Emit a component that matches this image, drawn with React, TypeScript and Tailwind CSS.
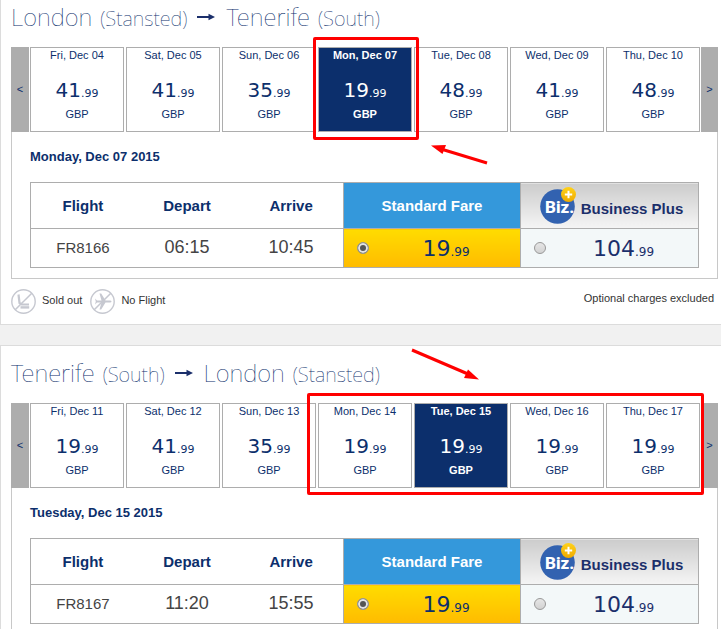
import React, { useState } from 'react';

interface Fare {
  day: string;
  whole: string;
}

interface Place {
  city: string;
  airport: string;
}

interface Trip {
  id: string;
  from: Place;
  to: Place;
  fares: Fare[];
  selected: number;
  fullDate: string;
  flight: string;
  depart: string;
  arrive: string;
}

const LONDON: Place = { city: 'London', airport: '(Stansted)' };
const TENERIFE: Place = { city: 'Tenerife', airport: '(South)' };

const outbound: Trip = {
  id: 'outbound',
  from: LONDON,
  to: TENERIFE,
  fares: [
    { day: 'Fri, Dec 04', whole: '41' },
    { day: 'Sat, Dec 05', whole: '41' },
    { day: 'Sun, Dec 06', whole: '35' },
    { day: 'Mon, Dec 07', whole: '19' },
    { day: 'Tue, Dec 08', whole: '48' },
    { day: 'Wed, Dec 09', whole: '41' },
    { day: 'Thu, Dec 10', whole: '48' },
  ],
  selected: 3,
  fullDate: 'Monday, Dec 07 2015',
  flight: 'FR8166',
  depart: '06:15',
  arrive: '10:45',
};

const inbound: Trip = {
  id: 'inbound',
  from: TENERIFE,
  to: LONDON,
  fares: [
    { day: 'Fri, Dec 11', whole: '19' },
    { day: 'Sat, Dec 12', whole: '41' },
    { day: 'Sun, Dec 13', whole: '35' },
    { day: 'Mon, Dec 14', whole: '19' },
    { day: 'Tue, Dec 15', whole: '19' },
    { day: 'Wed, Dec 16', whole: '19' },
    { day: 'Thu, Dec 17', whole: '19' },
  ],
  selected: 4,
  fullDate: 'Tuesday, Dec 15 2015',
  flight: 'FR8167',
  depart: '11:20',
  arrive: '15:55',
};

const Price: React.FC<{ whole: string; large?: boolean }> = ({ whole, large }) => (
  <span className="font-['DejaVu_Sans',sans-serif] whitespace-nowrap">
    <span className={large ? 'text-[22px]' : 'text-[20px]'}>{whole}</span>
    <span className={large ? 'text-[12px]' : 'text-[11px]'}>.99</span>
  </span>
);

const BizLogo = () => (
  <svg width="37" height="37" viewBox="0 0 37 37" aria-hidden="true">
    <defs>
      <linearGradient id="coin" x1="0" y1="0" x2="0" y2="1">
        <stop offset="0" stopColor="#ffd21a" />
        <stop offset="1" stopColor="#efaa00" />
      </linearGradient>
    </defs>
    <circle cx="17.500" cy="19.500" r="17.300" fill="#3262b0" />
    <text x="5" y="26" fill="#fff" fontSize="17" fontWeight="800" className="font-['Roboto',sans-serif]">Biz.</text>
    <circle cx="28.500" cy="7.500" r="7.500" fill="url(#coin)" />
    <path d="M28.500 3.800v7.400M24.800 7.500h7.400" stroke="#fff" strokeWidth="2" />
  </svg>
);

const SoldOutIcon = () => (
  <svg width="25" height="25" viewBox="0 0 25 25" fill="none" stroke="#c6c8d0" aria-hidden="true">
    <circle cx="12.500" cy="12.500" r="11.700" strokeWidth="1.400" />
    <path d="M7.500 5.500l1 8.500 2.500 1.500h7" strokeWidth="2.200" strokeLinejoin="round" />
    <path d="M9.500 18.400h8.700" strokeWidth="2.400" />
    <path d="M4.200 20.800L20.800 4.200" strokeWidth="1.500" />
  </svg>
);

const NoFlightIcon = () => (
  <svg width="25" height="25" viewBox="0 0 25 25" fill="none" stroke="#c6c8d0" aria-hidden="true">
    <circle cx="12.500" cy="12.500" r="11.700" strokeWidth="1.400" />
    <path
      d="M5 9.500l2 2h4.500L9.500 4.500h1.700l4.300 7h4.500c2 0 2 2 0 2h-4.500l-4.300 7H9.500l2-7H7l-2 2 .8-3z"
      fill="#c6c8d0"
      stroke="none"
    />
    <path d="M4.200 20.800L20.800 4.200" strokeWidth="1.500" />
  </svg>
);

const RouteHeading: React.FC<{ trip: Trip }> = ({ trip }) => (
  <h2 className="flex items-baseline h-[34px] text-[24px] leading-[34px] font-thin text-[#0c2f6c] font-['Noto_Sans','Open_Sans',sans-serif] whitespace-nowrap">
    {trip.from.city}
    <small className="ml-2 text-[20px]">{trip.from.airport}</small>
    <svg className="mx-[10px] self-center" width="19" height="8" viewBox="0 0 19 8" role="img" aria-label="to">
      <path d="M0 4h14" stroke="#1b2f6b" strokeWidth="2" />
      <path d="M11.500 0.800L18 4l-6.500 3.200z" fill="#1b2f6b" />
    </svg>
    {trip.to.city}
    <small className="ml-2 text-[20px]">{trip.to.airport}</small>
  </h2>
);

const arrowButton = 'shrink-0 bg-[#adadad] text-[11px] text-[#0c2f6c] cursor-pointer';

const Carousel: React.FC<{ trip: Trip; children: React.ReactNode }> = ({ trip, children }) => {
  const [selected, setSelected] = useState(trip.selected);

  return (
    <div className="relative flex gap-px h-[85px]">
      <button aria-label="Previous days" className={`${arrowButton} w-[18px]`}>&lt;</button>
      <div className="flex flex-1 gap-0.5">
        {trip.fares.map((fare, i) => (
          <button
            key={fare.day}
            onClick={() => setSelected(i)}
            className={`flex flex-1 flex-col items-center border border-[#adadad] text-[11px] leading-[15px] cursor-pointer
              ${i === selected ? 'bg-[#0c2f6c] font-bold text-white' : 'bg-white text-[#0c2f6c]'}`}
          >
            <span>{fare.day}</span>
            <span className="mt-3 h-8 leading-[30px] font-normal"><Price whole={fare.whole} /></span>
            <span>GBP</span>
          </button>
        ))}
      </div>
      <button aria-label="Next days" className={`${arrowButton} w-[17px]`}>&gt;</button>
      {children}
    </div>
  );
};

const radio = `absolute left-[13px] top-[13px] size-3 appearance-none rounded-full border border-[#999] bg-linear-to-b from-[#e6e6e6] to-[#d2d2d2]
  checked:bg-none checked:bg-[#555] checked:ring-inset checked:ring-2 checked:ring-[#e4e4e4]`;

const FareTable: React.FC<{ trip: Trip }> = ({ trip }) => (
  <table className="w-full table-fixed border-collapse border border-[#adadad] text-center text-[#0c2f6c]">
    <thead>
      <tr className="h-[46px] border-b border-[#adadad] text-[15px]">
        <th className="pt-0.5">Flight</th>
        <th className="pt-0.5">Depart</th>
        <th className="pt-0.5">Arrive</th>
        <th className="w-[177px] border-l border-[#adadad] bg-[#3498db] pt-0.5 text-white">Standard Fare</th>
        <th className="w-[178px] border-l border-[#adadad] bg-linear-to-b from-[#cccccc] to-[#f5f5f5] p-0 pl-1 text-[#1b2f6b]">
          <span className="flex items-center justify-center gap-1">
            <BizLogo />
            <span className="pt-2">Business Plus</span>
          </span>
        </th>
      </tr>
    </thead>
    <tbody>
      <tr className="h-[39px] text-[18px] text-[#444]">
        <td className="text-[15px]">{trip.flight}</td>
        <td className="pb-0.5">{trip.depart}</td>
        <td className="pb-0.5">{trip.arrive}</td>
        <td className="relative border-l border-[#adadad] bg-linear-to-b from-[#ffdc00] to-[#ffbb00] p-0 pl-7 text-[#0c2f6c]">
          <label>
            <input type="radio" name={trip.id} defaultChecked className={radio} />
            <Price whole="19" large />
          </label>
        </td>
        <td className="relative border-l border-[#adadad] bg-[#f3f8f9] p-0 pl-7 text-[#1b2f6b]">
          <label>
            <input type="radio" name={trip.id} className={radio} />
            <Price whole="104" large />
          </label>
        </td>
      </tr>
    </tbody>
  </table>
);

const TripPanel: React.FC<{ trip: Trip; children: React.ReactNode }> = ({ trip, children }) => (
  <>
    <RouteHeading trip={trip} />
    <div className="mt-[13px]">
      <Carousel trip={trip}>{children}</Carousel>
      <div className="border border-t-0 border-[#c8c8c8] pt-4 pr-[18px] pb-[10px] pl-[18px]">
        <h3 className="mb-4 text-[13px] leading-[18px] font-bold text-[#0c2f6c]">{trip.fullDate}</h3>
        <FareTable trip={trip} />
      </div>
    </div>
  </>
);

const Legend = () => (
  <div className="flex h-[45px] items-center gap-1.5 text-[11px] text-[#333]">
    <SoldOutIcon />
    <span className="mr-[2px] pb-0.5">Sold out</span>
    <NoFlightIcon />
    <span className="pb-0.5">No Flight</span>
    <span className="ml-auto mr-1 pb-1.5">Optional charges excluded</span>
  </div>
);

export default function App() {
  return (
    <main className="h-screen overflow-hidden bg-[#f1f1f1] font-['Liberation_Sans',Arial,sans-serif]">
      <section className="border-b border-l border-[#dcdcdc] bg-white pr-[3px] pl-[10px]">
        <TripPanel trip={outbound}>
          <div className="pointer-events-none absolute -top-[10px] left-[302px] h-[103px] w-[106px] rounded-xs border-3 border-[#ff0000]" />
          <svg className="pointer-events-none absolute top-[97px] left-[418px]" width="62" height="24" viewBox="0 0 62 24" aria-hidden="true">
            <path d="M12 5l46 14" stroke="#ff0000" strokeWidth="3" />
            <path d="M2 1.500L17 1l-3.500 9z" fill="#ff0000" />
          </svg>
        </TripPanel>
        <Legend />
      </section>
      <section className="mt-5 border-t border-l border-[#dcdcdc] bg-white pt-[10px] pr-[3px] pl-[10px]">
        <TripPanel trip={inbound}>
          <div className="pointer-events-none absolute -top-[10px] left-[296px] h-[102px] w-[397px] rounded-xs border-3 border-[#ff0000]" />
          <svg className="pointer-events-none absolute -top-[56px] left-[398px]" width="74" height="36" viewBox="0 0 74 36" aria-hidden="true">
            <path d="M3 3l56 24" stroke="#ff0000" strokeWidth="3" />
            <path d="M70 32.500l-15-1.500 4-8.500z" fill="#ff0000" />
          </svg>
        </TripPanel>
      </section>
    </main>
  );
}
